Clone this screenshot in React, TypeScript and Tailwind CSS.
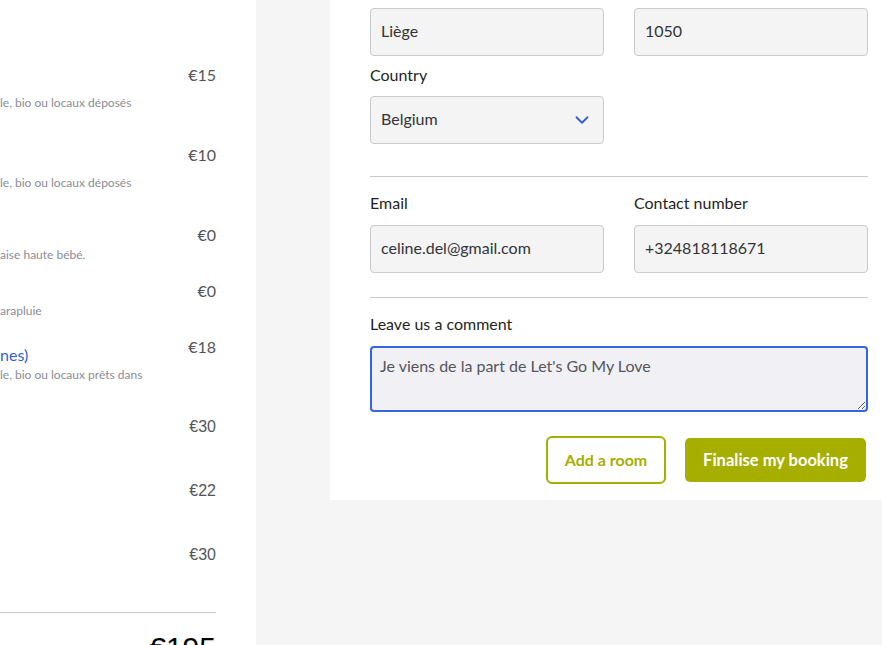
import { ChevronDown } from "lucide-react"

const ui = { fontFamily: "Lato, 'Noto Sans', sans-serif" }
const arial = { fontFamily: "'Liberation Sans', Arial, sans-serif" }

type Extra = {
  price: string
  desc?: string
  title?: string
  mt: string
  descGap?: string
  arial?: boolean
}

const extras: Extra[] = [
  { price: "€15", desc: "le, bio ou locaux déposés", mt: "mt-[65px]", descGap: "mt-[11px]" },
  { price: "€10", desc: "le, bio ou locaux déposés", mt: "mt-[35px]", descGap: "mt-[11px]" },
  { price: "€0", desc: "aise haute bébé.", mt: "mt-[35px]", descGap: "mt-[3px]" },
  { price: "€0", desc: "arapluie", mt: "mt-[19px]", descGap: "mt-[3px]" },
  { price: "€18", title: "nes)", desc: "le, bio ou locaux prêts dans", mt: "mt-[19px]", descGap: "mt-[3px]" },
  { price: "€30", mt: "mt-[35px]", arial: true },
  { price: "€22", mt: "mt-[44px]", arial: true },
  { price: "€30", mt: "mt-[44px]", arial: true },
]

function ExtraRow({ item }: { item: Extra }) {
  return (
    <div className={item.mt}>
      <div className="flex items-start justify-between">
        {item.title ? (
          <span className="mt-[8px] text-[16px] leading-[20px] text-[#2f5fd0]" style={ui}>
            {item.title}
          </span>
        ) : (
          <span />
        )}
        <span
          className="text-[16px] leading-[20px] text-[#555559]"
          style={item.arial ? arial : ui}
        >
          {item.price}
        </span>
      </div>
      {item.desc && (
        <div className={"text-[12px] leading-[14px] text-[#8b8b95] whitespace-nowrap " + item.descGap} style={ui}>
          {item.desc}
        </div>
      )}
    </div>
  )
}

function Field({ value, className }: { value: string; className?: string }) {
  return (
    <div
      className={
        "h-[48px] flex items-center px-[10px] pb-[3px] rounded-[4px] border border-[#c9c9ce] bg-[#f4f4f4] text-[16px] text-[#333338] " +
        (className ?? "")
      }
    >
      {value}
    </div>
  )
}

function Label({ children, className }: { children: React.ReactNode; className?: string }) {
  return (
    <div className={"text-[16px] leading-[20px] text-[#1f1f22] " + (className ?? "")}>{children}</div>
  )
}

export default function App() {
  return (
    <div className="w-[882px] h-[645px] overflow-hidden flex bg-[#f5f5f5]" style={ui}>
      {/* récapitulatif */}
      <div className="w-[256px] h-full bg-white pr-[40px] overflow-hidden shrink-0">
        {extras.map((item, i) => (
          <ExtraRow key={i} item={item} />
        ))}
        <div className="mt-[47px] border-t border-[#c8c8cc]" />
        <div className="mt-[15px] text-right text-[30px] leading-[40px] text-black" style={arial}>
          €195
        </div>
      </div>

      {/* formulaire */}
      <div className="ml-[74px] w-[552px] h-[500px] bg-white pl-[40px] pr-[14px] pt-[8px] shrink-0">
        <div className="grid grid-cols-2 gap-x-[30px]">
          <Field value="Liège" />
          <Field value="1050" />
        </div>
        <Label className="mt-[9px]">Country</Label>
        <div className="grid grid-cols-2 gap-x-[30px] mt-[11px]">
          <div className="h-[48px] flex items-center justify-between pl-[10px] pr-[10px] pb-[3px] rounded-[4px] border border-[#c9c9ce] bg-[#f4f4f4] text-[16px] text-[#333338]">
            <span>Belgium</span>
            <ChevronDown size={22} strokeWidth={2} className="text-[#2f5fd0] mt-[3px]" />
          </div>
        </div>

        <div className="mt-[32px] border-t border-[#c8c8cc]" />

        <div className="grid grid-cols-2 gap-x-[30px] mt-[16px]">
          <Label>Email</Label>
          <Label>Contact number</Label>
        </div>
        <div className="grid grid-cols-2 gap-x-[30px] mt-[12px]">
          <Field value="celine.del@gmail.com" />
          <Field value="+324818118671" />
        </div>

        <div className="mt-[24px] border-t border-[#c8c8cc]" />

        <Label className="mt-[16px]">Leave us a comment</Label>
        <div className="relative mt-[12px]">
          <textarea
            defaultValue="Je viens de la part de Let's Go My Love"
            className="block w-full h-[66px] rounded-[4px] border-2 border-[#3367e0] bg-[#f0f0f5] px-[8px] pt-[7px] text-[16px] leading-[22px] text-[#55555c] outline-none resize-y"
            style={ui}
          />
        </div>

        <div className="mt-[24px] flex items-center justify-end gap-[19px] pr-[2px]">
          <button className="h-[48px] w-[120px] rounded-[6px] border-2 border-[#a6ae00] bg-white text-[16px] font-bold text-[#a6ae00]">
            Add a room
          </button>
          <button className="h-[44px] w-[181px] rounded-[5px] bg-[#a6ae00] text-[16.5px] font-bold text-white">
            Finalise my booking
          </button>
        </div>
      </div>
    </div>
  )
}
